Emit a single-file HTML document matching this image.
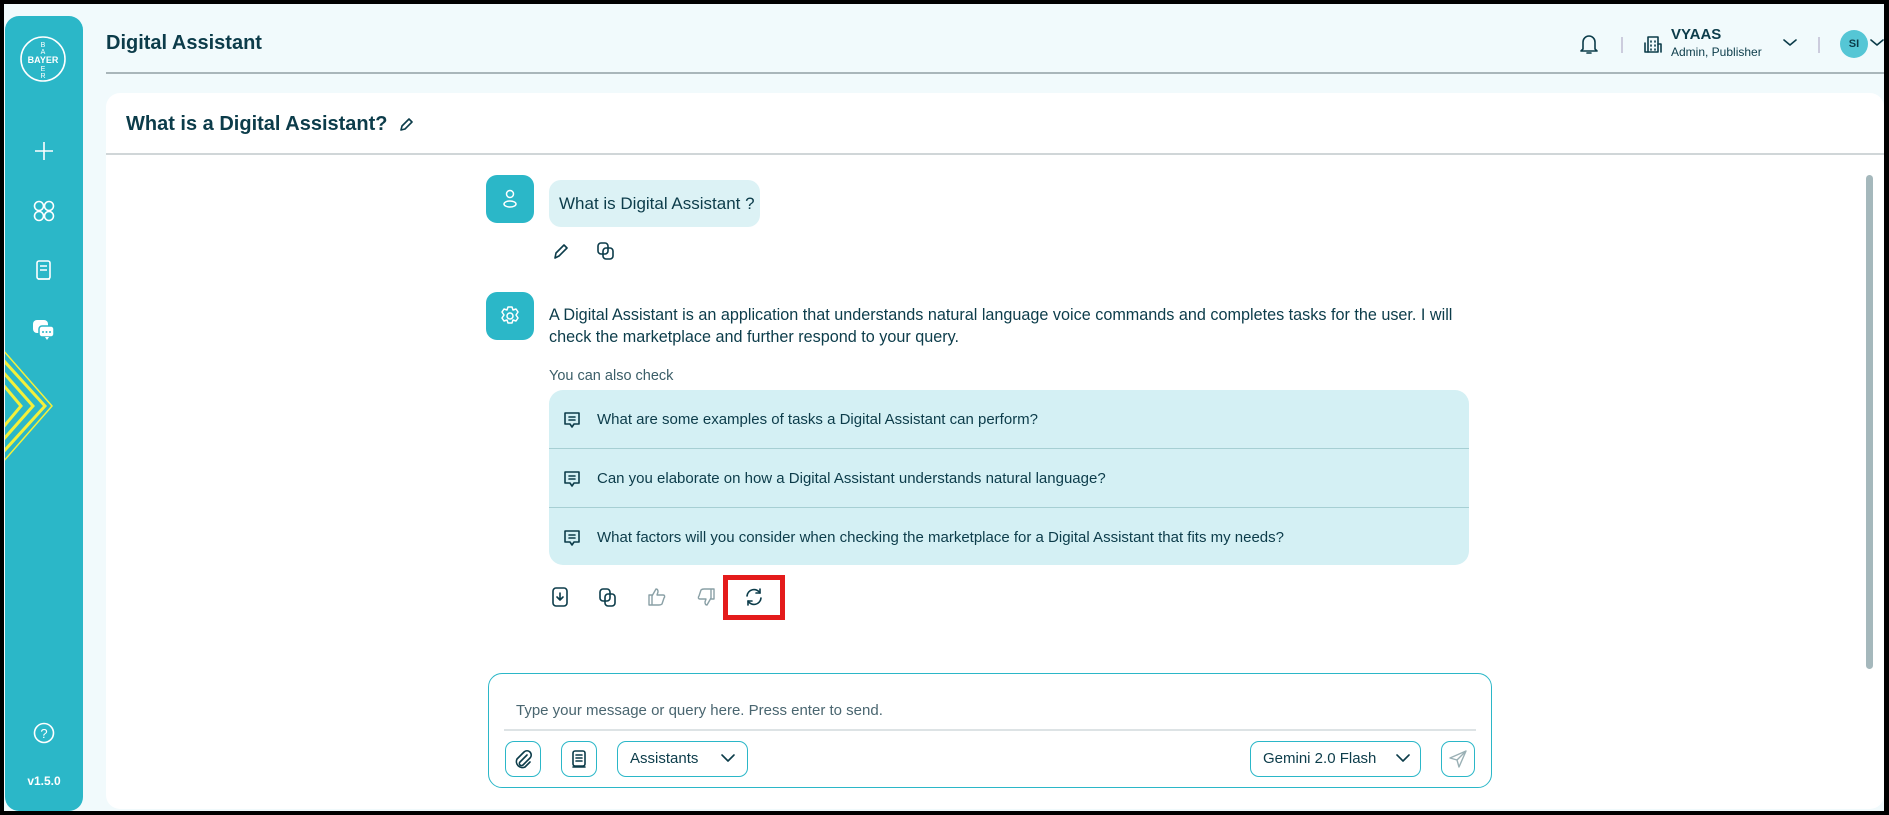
<!DOCTYPE html><html><head><meta charset="utf-8"><style>
*{box-sizing:border-box;margin:0;padding:0}
body{width:1889px;height:815px;overflow:hidden;background:#000;font-family:"Liberation Sans",sans-serif;color:#0c3c4a}
#f{position:absolute;left:4px;top:4px;width:1880px;height:807px;background:#f1fafc;overflow:hidden}
.a{position:absolute}
#sb{left:1px;top:12px;width:78px;height:795px;background:#2bb7c8;border-radius:14px;overflow:hidden}
.ic{stroke:#fff;fill:none;stroke-width:1.6}
.t{stroke:#0c3c4a;fill:none;stroke-width:1.6;stroke-linecap:round;stroke-linejoin:round}
#card{left:102px;top:89px;width:1778px;height:716px;background:#fff;border-radius:14px}
.sug{position:absolute;left:0;width:920px;height:59px;font-size:15px;line-height:59px;padding-left:48px}
.btn{position:absolute;border:1.5px solid #2bb7c8;border-radius:9px;height:36px}
</style></head><body><div id="f">
<div id="sb" class="a">
<svg class="a" style="left:13px;top:18px" width="50" height="50"><circle cx="25" cy="25" r="22" class="ic" stroke-width="2"/><text x="25" y="29" fill="#fff" font-size="9" font-weight="bold" text-anchor="middle" font-family="Liberation Sans">BAYER</text><text x="25" y="13" fill="#fff" font-size="7" text-anchor="middle">B</text><text x="25" y="20" fill="#fff" font-size="7" text-anchor="middle">A</text><text x="25" y="37" fill="#fff" font-size="7" text-anchor="middle">E</text><text x="25" y="44" fill="#fff" font-size="7" text-anchor="middle">R</text></svg>
<svg class="a" style="left:28px;top:124px" width="22" height="22"><path d="M11 2v18M2 11h18" class="ic" stroke-width="2"/></svg>
<svg class="a" style="left:28px;top:184px" width="22" height="22"><circle cx="6" cy="6" r="4.5" class="ic"/><circle cx="16" cy="6" r="4.5" class="ic"/><circle cx="6" cy="16" r="4.5" class="ic"/><circle cx="16" cy="16" r="4.5" class="ic"/></svg>
<svg class="a" style="left:30px;top:244px" width="18" height="22"><rect x="2" y="1" width="13" height="18" rx="2" class="ic"/><path d="M5 6h7M5 10h7M3 19h12" class="ic"/></svg>
<svg class="a" style="left:27px;top:303px" width="24" height="22"><rect x="1" y="1" width="15" height="13" rx="4" fill="#fff"/><rect x="7" y="7" width="15" height="11" rx="3" fill="#fff" stroke="#2bb7c8" stroke-width="1.5"/><path d="M13 18l2 3 2-3" fill="#fff"/><circle cx="11" cy="13" r="1" fill="#2bb7c8"/><circle cx="14.5" cy="13" r="1" fill="#2bb7c8"/><circle cx="18" cy="13" r="1" fill="#2bb7c8"/></svg>
<svg class="a" style="left:0;top:335px" width="50" height="130"><path d="M-10 0L40 55L-10 110M-10 12L28 55L-10 98M-10 24L16 55L-10 86" stroke="#f3f03a" stroke-width="3" fill="none"/><path d="M-10 -10L47 55L-10 120" stroke="#f3f03a" stroke-width="1.5" fill="none"/></svg>
<svg class="a" style="left:28px;top:706px" width="22" height="22"><circle cx="11" cy="11" r="9.5" class="ic"/><text x="11" y="16" fill="#fff" font-size="13" text-anchor="middle">?</text></svg>
<div class="a" style="left:0;width:78px;top:758px;text-align:center;color:#fff;font-size:12px;font-weight:bold">v1.5.0</div>
</div>
<div class="a" style="left:102px;top:28px;font-size:20px;font-weight:bold">Digital Assistant</div>
<div class="a" style="left:102px;top:68px;width:1780px;height:1.5px;background:#a9b6ba"></div>
<svg class="a" style="left:1574px;top:28px" width="22" height="24"><path d="M5 17V10a6 6 0 0 1 12 0v7l2 2H3z M9 21h4" class="t"/></svg>
<div class="a" style="left:1617px;top:33px;width:1.5px;height:16px;background:#ccd"></div>
<svg class="a" style="left:1640px;top:31px" width="20" height="20"><rect x="4" y="2" width="10" height="15" class="t" stroke-width="1.3"/><path d="M1 8v9h3M14 9h3v8M7 6v1M11 6v1M7 10v1M11 10v1M7 14v1M11 14v1" class="t" stroke-width="1.3"/></svg>
<div class="a" style="left:1667px;top:22px;font-size:15px;font-weight:bold">VYAAS</div>
<div class="a" style="left:1667px;top:41px;font-size:12px">Admin, Publisher</div>
<svg class="a" style="left:1779px;top:34px" width="14" height="10"><path d="M1 2l6 5 6-5" class="t" stroke-width="1.2"/></svg>
<div class="a" style="left:1814px;top:33px;width:1.5px;height:16px;background:#ccd"></div>
<div class="a" style="left:1836px;top:26px;width:28px;height:28px;border-radius:50%;background:#55c6d5;font-size:11px;font-weight:bold;text-align:center;line-height:28px">SI</div>
<svg class="a" style="left:1866px;top:34px" width="14" height="10"><path d="M1 2l6 5 6-5" class="t" stroke-width="1.2"/></svg>
<div id="card" class="a">
<div class="a" style="left:20px;top:20px;font-size:20px;font-weight:bold">What is a Digital Assistant?</div>
<svg class="a" style="left:292px;top:24px" width="16" height="16"><path d="M3 13l1-4 7-7 3 3-7 7z" class="t" stroke-width="1.3"/></svg>
<div class="a" style="left:0;top:60px;width:1778px;height:1.5px;background:#d0d6d8"></div>
<div class="a" style="left:1760px;top:82px;width:7px;height:494px;background:#a5b8bc;border-radius:4px"></div>
<div class="a" style="left:380px;top:82px;width:48px;height:48px;border-radius:11px;background:#2bb7c8"></div>
<svg class="a" style="left:392px;top:94px" width="24" height="24"><circle cx="12" cy="7" r="3.5" stroke="#fff" fill="none" stroke-width="1.5"/><ellipse cx="12" cy="17" rx="6" ry="3" stroke="#fff" fill="none" stroke-width="1.5"/></svg>
<div class="a" style="left:443px;top:87px;width:211px;height:47px;border-radius:12px;background:#dcf2f5;font-size:17px;line-height:47px;padding-left:10px">What is Digital Assistant ?</div>
<svg class="a" style="left:445px;top:148px" width="20" height="20"><path d="M4 17l1-5 8-8 3 3-8 8z" class="t" stroke-width="1.4"/></svg>
<svg class="a" style="left:490px;top:148px" width="20" height="20"><rect x="2" y="2" width="10" height="11" rx="3" class="t" stroke-width="1.4"/><rect x="7" y="7" width="10" height="11" rx="3" fill="#fff" class="t" stroke-width="1.4"/></svg>
<div class="a" style="left:380px;top:199px;width:48px;height:48px;border-radius:11px;background:#2bb7c8"></div>
<svg class="a" style="left:392px;top:211px" width="24" height="24"><circle cx="12" cy="12" r="3" stroke="#fff" fill="none" stroke-width="1.5"/><path d="M10 3h4l1 3 3-1 2 3-2 3 2 3-2 3-3-1-1 3h-4l-1-3-3 1-2-3 2-3-2-3 2-3 3 1z" stroke="#fff" fill="none" stroke-width="1.5" stroke-linejoin="round"/></svg>
<div class="a" style="left:443px;top:211px;width:940px;font-size:16.2px;line-height:22px">A Digital Assistant is an application that understands natural language voice commands and completes tasks for the user. I will check the marketplace and further respond to your query.</div>
<div class="a" style="left:443px;top:275px;font-size:14.5px;color:#3b5e68">You can also check</div>
<div class="a" style="left:443px;top:297px;width:920px;height:175px;background:#d4f0f4;border-radius:14px;overflow:hidden">
<div class="sug" style="top:0;border-bottom:1.5px solid #a6cfd3">What are some examples of tasks a Digital Assistant can perform?</div>
<div class="sug" style="top:59px;border-bottom:1.5px solid #a6cfd3">Can you elaborate on how a Digital Assistant understands natural language?</div>
<div class="sug" style="top:118px">What factors will you consider when checking the marketplace for a Digital Assistant that fits my needs?</div>
<svg class="a" style="left:13px;top:20px" width="20" height="140"><g class="t" stroke-width="1.4"><path d="M3 3h14v11h-5l-2 3-2-3H3z M7 7h6M7 10h6"/><path transform="translate(0,59)" d="M3 3h14v11h-5l-2 3-2-3H3z M7 7h6M7 10h6"/><path transform="translate(0,118)" d="M3 3h14v11h-5l-2 3-2-3H3z M7 7h6M7 10h6"/></g></svg>
</div>
<svg class="a" style="left:444px;top:493px" width="20" height="22"><rect x="3" y="2" width="14" height="18" rx="3" class="t" stroke-width="1.4"/><path d="M10 7v7M7 11l3 3 3-3" class="t" stroke-width="1.4"/></svg>
<svg class="a" style="left:492px;top:493px" width="20" height="22"><rect x="2" y="3" width="10" height="12" rx="3" class="t" stroke-width="1.4"/><rect x="7" y="8" width="10" height="12" rx="3" fill="#fff" class="t" stroke-width="1.4"/></svg>
<svg class="a" style="left:540px;top:493px" width="22" height="22"><path d="M3 9h3v10H3zM6 10l4-7c2 0 2 2 2 3l-1 3h6c2 0 2 2 1 3l-2 6c-1 1-2 1-3 1H6" stroke="#8aa0a6" fill="none" stroke-width="1.4" stroke-linejoin="round"/></svg>
<svg class="a" style="left:589px;top:493px" width="22" height="22"><path d="M19 13h-3V3h3zM16 12l-4 7c-2 0-2-2-2-3l1-3H5c-2 0-2-2-1-3l2-6c1-1 2-1 3-1h7" stroke="#8aa0a6" fill="none" stroke-width="1.4" stroke-linejoin="round"/></svg>
<div class="a" style="left:617px;top:482px;width:62px;height:45px;border:5px solid #e41b1b"></div>
<svg class="a" style="left:637px;top:493px" width="22" height="22"><path d="M4 10a7 7 0 0 1 13-3M18 12a7 7 0 0 1-13 3" class="t" stroke-width="1.5"/><path d="M17 3v4h-4M5 19v-4h4" class="t" stroke-width="1.5"/></svg>
<div class="a" style="left:382px;top:580px;width:1004px;height:115px;border:1.5px solid #2bb7c8;border-radius:14px"></div>
<div class="a" style="left:410px;top:609px;font-size:15px;color:#4a6670">Type your message or query here. Press enter to send.</div>
<div class="a" style="left:398px;top:636px;width:972px;height:1.5px;background:#dde3e5"></div>
<div class="btn" style="left:399px;top:648px;width:36px"></div>
<svg class="a" style="left:407px;top:656px" width="20" height="20"><path d="M14 6l-7 7a2 2 0 0 0 3 3l7-7a4 4 0 0 0-6-6l-7 7a6 6 0 0 0 8 8l5-5" class="t" stroke-width="1.4"/></svg>
<div class="btn" style="left:455px;top:648px;width:36px"></div>
<svg class="a" style="left:463px;top:656px" width="20" height="20"><rect x="4" y="2" width="12" height="15" rx="2" class="t" stroke-width="1.4"/><path d="M7 6h6M7 9h6M7 12h6M4 18h12" class="t" stroke-width="1.4"/></svg>
<div class="btn" style="left:511px;top:648px;width:131px;font-size:15px;line-height:33px;padding-left:12px">Assistants</div>
<svg class="a" style="left:614px;top:660px" width="16" height="10"><path d="M2 2l6 6 6-6" class="t" stroke-width="1.6"/></svg>
<div class="btn" style="left:1144px;top:648px;width:171px;font-size:15px;line-height:33px;padding-left:12px">Gemini 2.0 Flash</div>
<svg class="a" style="left:1289px;top:660px" width="16" height="10"><path d="M2 2l6 6 6-6" class="t" stroke-width="1.6"/></svg>
<div class="btn" style="left:1335px;top:648px;width:34px"></div>
<svg class="a" style="left:1342px;top:656px" width="20" height="20"><path d="M18 2L2 9l7 2 2 7z M9 11l9-9" stroke="#9ab0b5" fill="none" stroke-width="1.4" stroke-linejoin="round"/></svg>
</div>
</div></body></html>
